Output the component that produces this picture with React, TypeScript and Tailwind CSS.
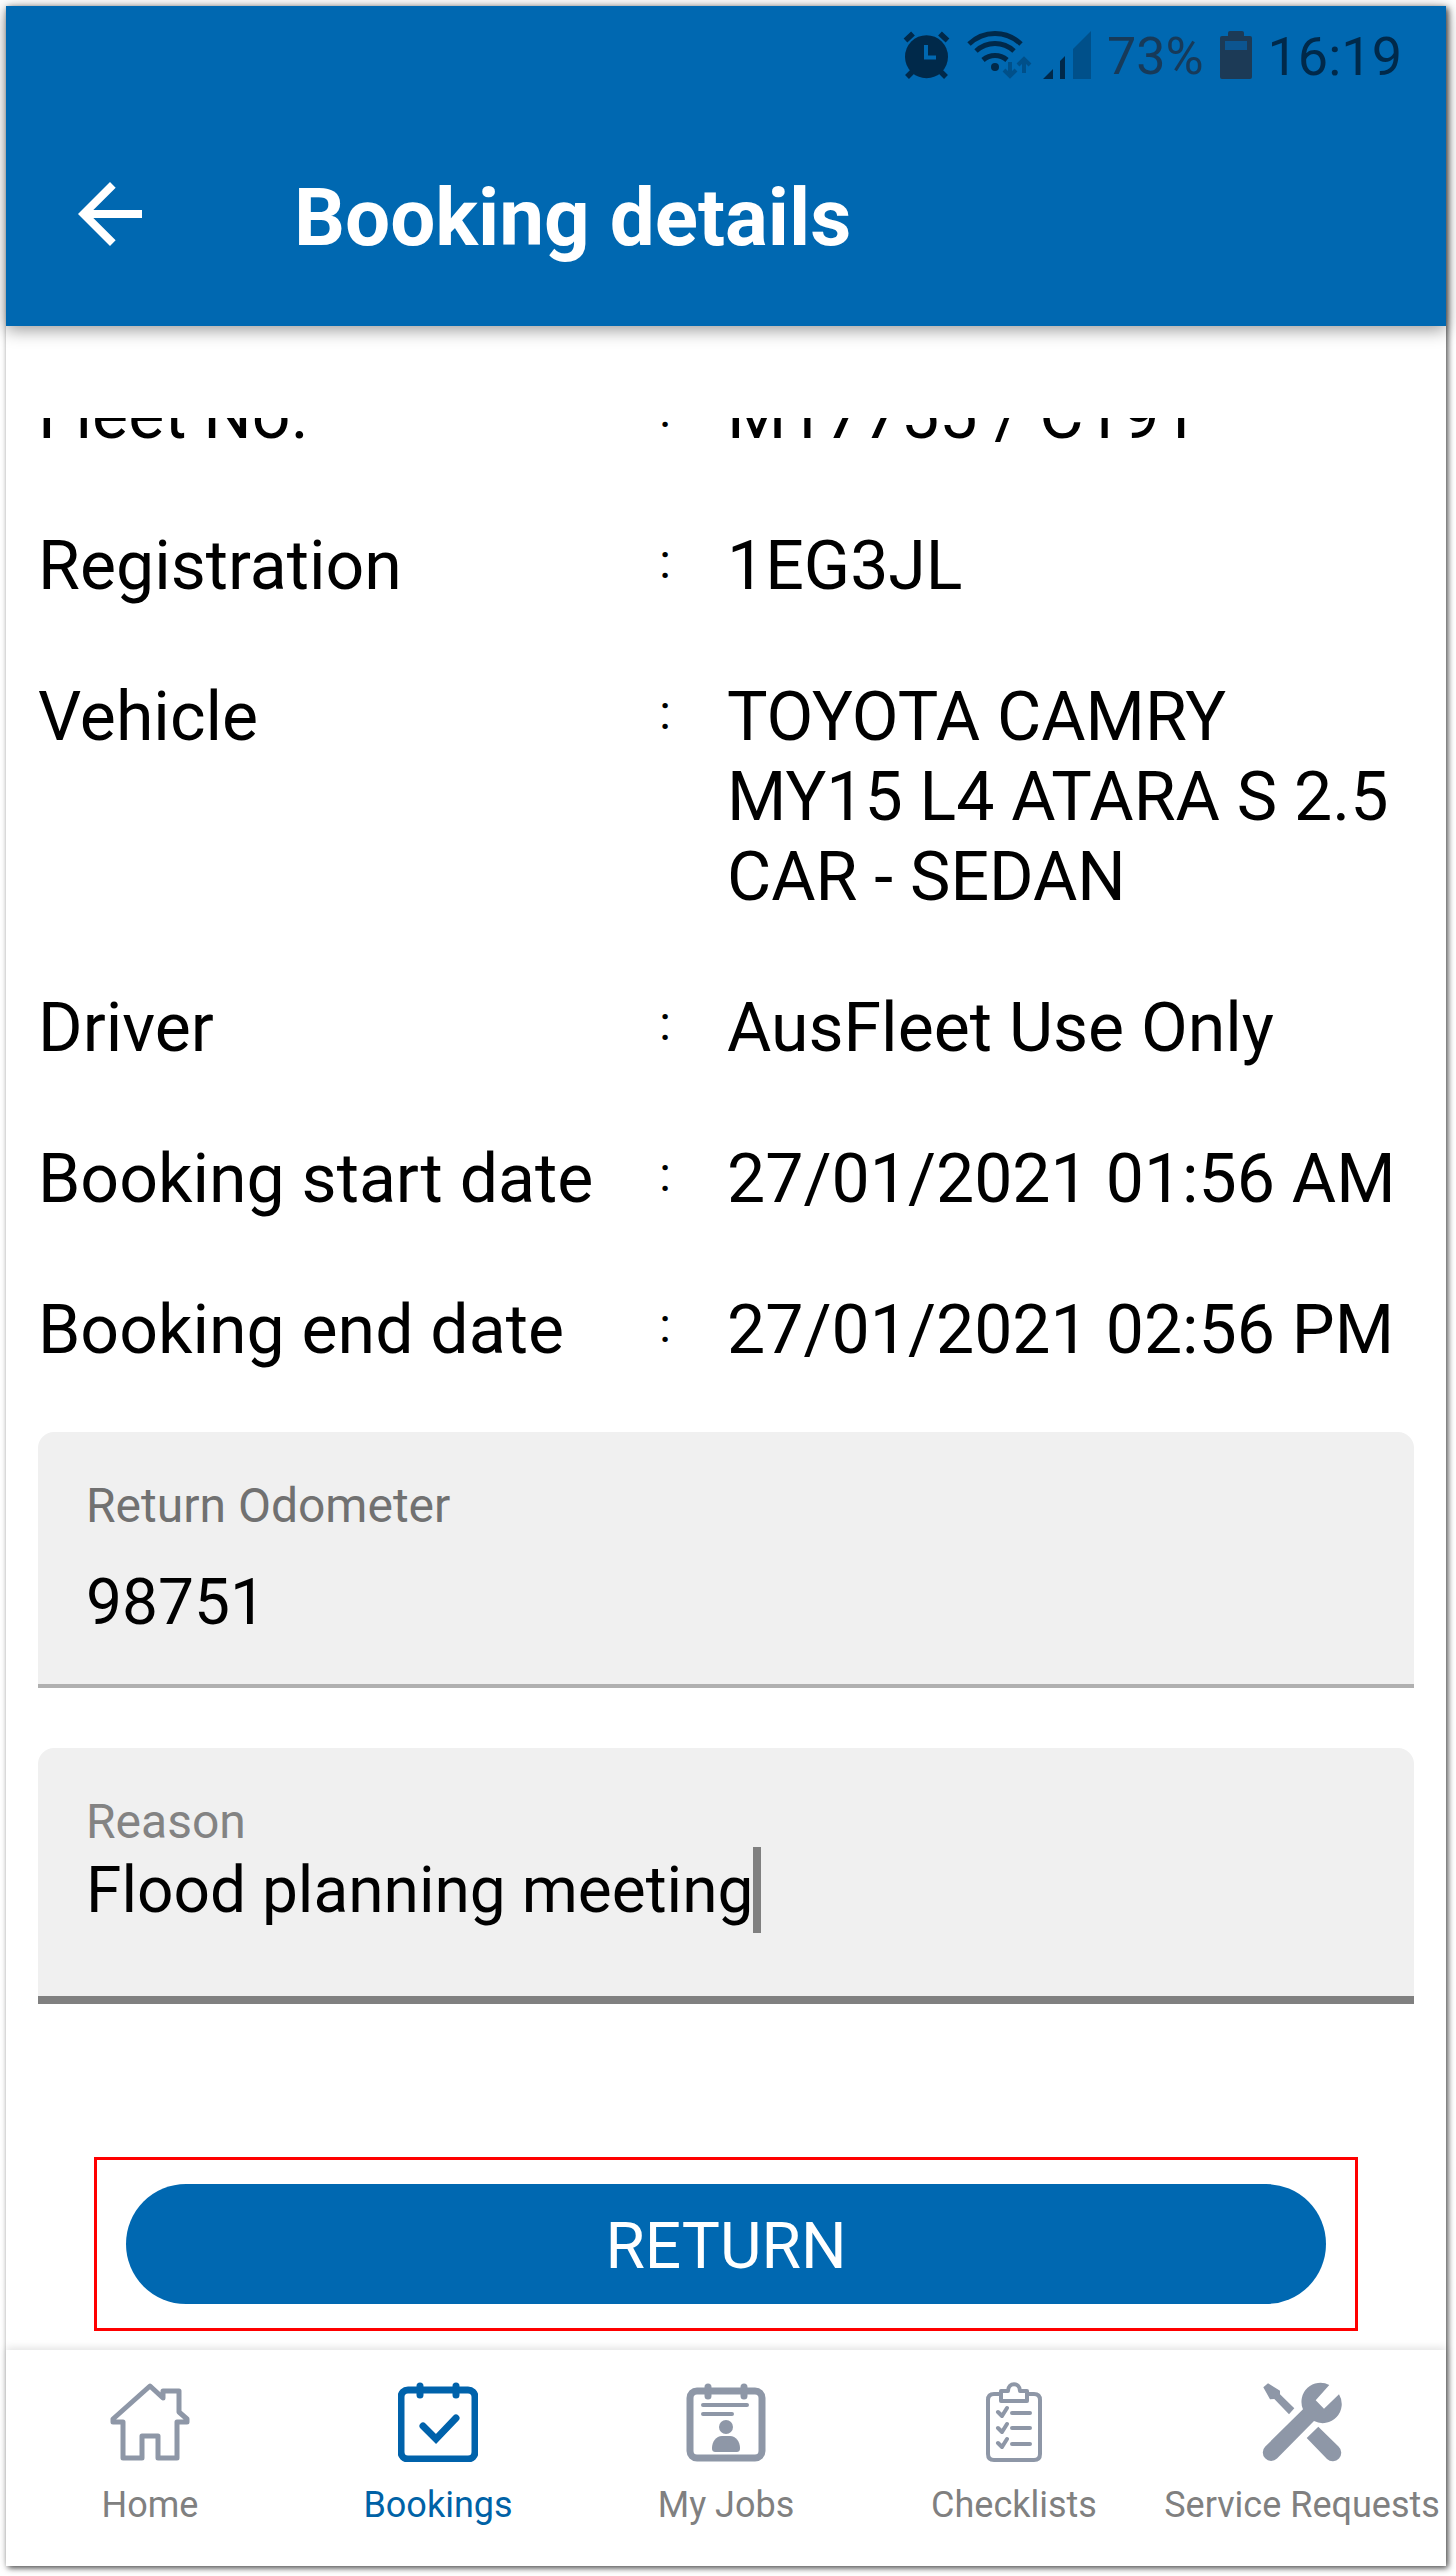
import React, { useState } from 'react';

const details = [
  { label: 'Fleet No.', value: 'M17755 / C191' },
  { label: 'Registration', value: '1EG3JL' },
  { label: 'Vehicle', value: 'TOYOTA CAMRY\nMY15 L4 ATARA S 2.5\nCAR - SEDAN' },
  { label: 'Driver', value: 'AusFleet Use Only' },
  { label: 'Booking start date', value: '27/01/2021 01:56 AM' },
  { label: 'Booking end date', value: '27/01/2021 02:56 PM' },
];

function StatusBar() {
  return (
    <div className="flex h-24 items-center justify-end pt-0.5 pr-11 text-[54px] leading-none text-[#00294a]">
      <svg viewBox="0 0 48 48" className="mr-4 h-12 w-12" fill="currentColor">
        <circle cx="23.5" cy="25.7" r="21.5" />
        <path d="M2.5 9.5 10 2.5M37 2.5 44.5 9.5M10 40 4 46M37 40 43 46" stroke="currentColor" strokeWidth="5.5" />
        <path d="M23 14v12.5h10" fill="none" stroke="#0068b1" strokeWidth="4" />
      </svg>
      <svg viewBox="0 0 68 48" className="mr-2 h-12 w-17" fill="none" stroke="currentColor" strokeWidth="5">
        <path d="M2 13C17-1 39-1 54 13M9 20c11-10 27-10 38 0M16 29c7-6 17-6 24 0" />
        <circle cx="28" cy="36" r="4" fill="currentColor" stroke="none" />
        <path d="M43 31v13M37 39l6 6 6-6M57 42V30M51 34l6-6 6 6" stroke="#00508a" strokeWidth="4" />
      </svg>
      <svg viewBox="0 0 48 48" className="mr-4 h-12 w-12" fill="currentColor">
        <path d="M0 48 10 38v10zM17 48V30l5-5v23z" />
        <path d="M30 48V18L48 0v48z" fill="#00508a" />
      </svg>
      <span className="pt-1 text-[52px] leading-none text-[#173a59]">73%</span>
      <svg viewBox="0 0 32 48" className="mx-4 h-12 w-8" fill="#1c3a56">
        <path d="M8 5V2q0-2 2-2h12q2 0 2 2v3h6q2 0 2 2v39q0 2-2 2H2q-2 0-2-2V7q0-2 2-2z" />
        <path d="M5 10h22v9H5z" fill="#0c5590" />
      </svg>
      <span className="pt-1">16:19</span>
    </div>
  );
}

function TopBar() {
  return (
    <header className="relative z-10 h-80 shrink-0 bg-[#0068b1] shadow-[0_4px_16px_rgba(0,0,0,0.4)]">
      <StatusBar />
      <div className="flex h-56 items-center pl-14 text-white">
        <button type="button" aria-label="Back" className="mr-34">
          <svg viewBox="0 0 24 24" className="h-24 w-24" fill="currentColor">
            <path d="M20 11H7.83l5.59-5.59L12 4l-8 8 8 8 1.41-1.41L7.83 13H20z" />
          </svg>
        </button>
        <h1 className="pt-2 text-[80px] leading-24 font-bold">Booking details</h1>
      </div>
    </header>
  );
}

function HomeIcon() {
  return (
    <svg viewBox="0 0 80 80" className="h-20 w-20" fill="none" stroke="currentColor" strokeWidth="5" strokeLinejoin="round">
      <path d="M40 4 3 37v3h10v36h19V54h16v22h19V40h10v-3l-8-7V9H53v7z" />
    </svg>
  );
}

function BookingsIcon() {
  return (
    <svg viewBox="0 0 80 80" className="h-20 w-20" fill="none" stroke="currentColor" strokeWidth="7" strokeLinecap="round">
      <rect x="3" y="8" width="74" height="69" rx="7" />
      <path d="M22 4v9M58 4v9M25 44l13 13 20-21" />
    </svg>
  );
}

function JobsIcon() {
  return (
    <svg viewBox="0 0 80 80" className="h-20 w-20" fill="none" stroke="currentColor" strokeLinecap="round">
      <rect x="4" y="9" width="72" height="67" rx="7" strokeWidth="7" />
      <path d="M22 5v9M58 5v9" strokeWidth="7" />
      <path d="M17 23h44M17 32h29" strokeWidth="4" />
      <circle cx="40" cy="45" r="7" fill="currentColor" stroke="none" />
      <path d="M36 54h8c6 0 10 6 10 12 0 3-1 4-4 4H30c-3 0-4-1-4-4 0-6 4-12 10-12z" fill="currentColor" stroke="none" />
    </svg>
  );
}

function ChecklistsIcon() {
  return (
    <svg viewBox="0 0 80 80" className="h-20 w-20" fill="none" stroke="currentColor" strokeWidth="4" strokeLinejoin="round" strokeLinecap="round">
      <path d="M27 12h-7q-6 0-6 6v54q0 6 6 6h40q6 0 6-6V18q0-6-6-6h-7" />
      <path d="M27 9h7c0-9 12-9 12 0h7v10H27z" />
      <path d="m24 30 4 4 5-8M24 46l4 4 5-8M24 61l4 4 5-8M38 31h18M38 46h18M38 62h18" />
    </svg>
  );
}

function ServiceIcon() {
  return (
    <svg viewBox="0 0 80 80" className="h-20 w-20" fill="currentColor">
      <path d="M1.3 5.3 6 1.3 18 8.7v3.6l14.3 14-5.3 6L12.3 17 8 17.3z" />
      <path d="M56.3 44.7 76.5 64.5A8.3 8.3 0 0 1 65 77L44.7 56z" />
      <path d="M67.3 3 53.7 18.3l8.3 8.4 15-14.4A19 19 0 0 1 52 39L15 76.5A8.3 8.3 0 0 1 3.3 64.5L41 27.3A19 19 0 0 1 67.3 3z" />
    </svg>
  );
}

const tabs = [
  { label: 'Home', icon: HomeIcon },
  { label: 'Bookings', icon: BookingsIcon, active: true },
  { label: 'My Jobs', icon: JobsIcon },
  { label: 'Checklists', icon: ChecklistsIcon },
  { label: 'Service Requests', icon: ServiceIcon },
];

function TabBar() {
  return (
    <nav className="grid h-54 shrink-0 grid-cols-5 bg-white shadow-[0_-2px_8px_rgba(0,0,0,0.12)]">
      {tabs.map(({ label, icon: Icon, active }) => (
        <a key={label} href="#" className={`flex flex-col items-center pt-8 ${active ? 'text-[#0062ab]' : 'text-[#8e97a7]'}`}>
          <Icon />
          <span className={`mt-[21px] text-[36px] leading-11 whitespace-nowrap ${active ? 'text-[#0062a6]' : 'text-[#808080]'}`}>
            {label}
          </span>
        </a>
      ))}
    </nav>
  );
}

export default function App() {
  const [odometer, setOdometer] = useState('98751');
  const [reason, setReason] = useState('Flood planning meeting');

  return (
    <div className="flex min-h-screen flex-col bg-white pt-1.5 pr-2.5 pb-2.5 pl-1.5 font-[Roboto,sans-serif] text-black">
      <div className="flex grow flex-col bg-white shadow-[2px_2px_6px_rgba(0,0,0,0.7)]">
        <TopBar />

        <main className="flex grow flex-col px-8 pt-23">
          {/* Scrolled list, first row is cut by the top edge */}
          <div className="overflow-hidden">
            <dl className="-mt-[43px] flex flex-col gap-[71px] text-[68px] leading-20">
              {details.map(({ label, value }) => (
                <div key={label} className="flex">
                  <dt className="flex w-[46%] shrink-0 justify-between">
                    {label}
                    <span className="text-5xl leading-18">:</span>
                  </dt>
                  <dd className="ml-14 whitespace-pre-line">{value}</dd>
                </div>
              ))}
            </dl>
          </div>

          <label className="mt-[62px] flex h-64 flex-col rounded-t-2xl border-b-4 border-[#b0b0b0] bg-[#f0f0f0] px-12 pt-[46px] text-5xl leading-14 text-[#717171]">
            Return Odometer
            <input
              value={odometer}
              onChange={(e) => setOdometer(e.target.value)}
              className="mt-7 h-20 text-[64px] text-black outline-none"
            />
          </label>

          <label className="mt-15 flex h-64 flex-col rounded-t-2xl border-b-8 border-[#808080] bg-[#f0f0f0] px-12 pt-[46px] text-5xl leading-14 text-[#838383]">
            Reason
            <span className="flex h-20 items-center">
              <input
                value={reason}
                onChange={(e) => setReason(e.target.value)}
                className="field-sizing-content h-20 text-[64px] text-black outline-none"
              />
              <span className="h-[86px] w-2 bg-[#808080]" />
            </span>
          </label>

          <div className="mx-14 mt-auto mb-[19px] border-3 border-[#ff0000] px-[29px] py-6">
            <button type="button" className="h-30 w-full rounded-full bg-[#0068b1] pt-1.5 text-[64px] leading-20 text-white">
              RETURN
            </button>
          </div>
        </main>

        <TabBar />
      </div>
    </div>
  );
}
